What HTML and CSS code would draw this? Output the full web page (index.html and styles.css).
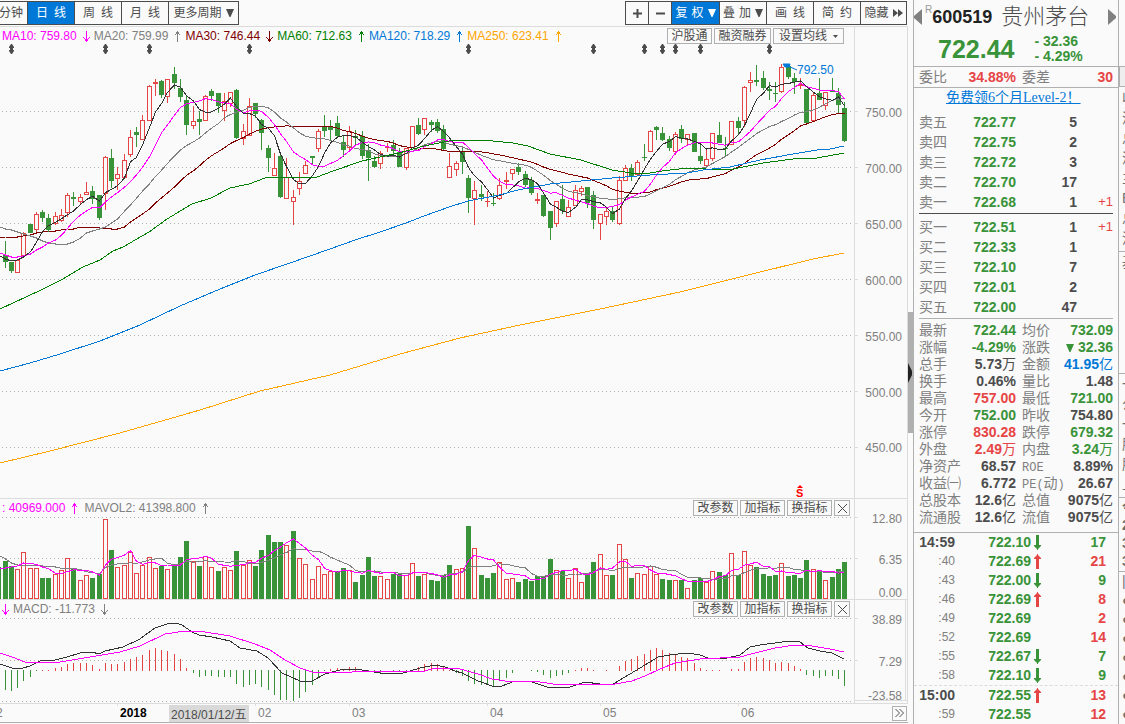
FILE: index.html
```html
<!DOCTYPE html>
<html lang="zh-CN">
<head>
<meta charset="utf-8">
<title>贵州茅台 600519</title>
<link rel="stylesheet" href="styles.css">
</head>
<body>
<svg class="defs" aria-hidden="true">
  <symbol id="up" viewBox="0 0 7 11"><path d="M3.5 11V1M.5 4.5L3.5 1L6.5 4.5" fill="none" stroke="currentColor"/></symbol>
  <symbol id="down" viewBox="0 0 7 11"><path d="M3.5 0V10M.5 6.5L3.5 10L6.5 6.5" fill="none" stroke="currentColor"/></symbol>
  <symbol id="fatup" viewBox="0 0 7 15"><path d="M2 15V5H0V4L3 1V0H4V1L7 4V5H5V15Z" fill="currentColor"/></symbol>
  <symbol id="fatdown" viewBox="0 0 7 15"><path d="M2 0V10H0V11L3 14V15H4V14L7 11V10H5V0Z" fill="currentColor"/></symbol>
  <symbol id="caret" viewBox="0 0 8 8"><path d="M0 0H8L4.5 8H3.5Z" fill="currentColor"/></symbol>
</svg>
<div class="app">
  <main class="main">
    <nav class="toolbar">
      <div class="group">
        <button class="tb tb-cut">分钟</button>
        <button class="tb on"><span>日</span><span>线</span></button>
        <button class="tb"><span>周</span><span>线</span></button>
        <button class="tb"><span>月</span><span>线</span></button>
        <button class="tb tb-more">更多周期<svg class="caret"><use href="#caret"/></svg></button>
      </div>
      <div class="group group-right">
        <button class="tb tb-sm" aria-label="放大"><svg width="9" height="9"><path d="M0 4.5H9M4.5 0V9" stroke="currentColor" stroke-width="2"/></svg></button>
        <button class="tb tb-sm" aria-label="缩小"><svg width="9" height="9"><path d="M0 4.5H9" stroke="currentColor" stroke-width="2"/></svg></button>
        <button class="tb tb-drop on"><span>复</span><span>权</span><svg class="caret"><use href="#caret"/></svg></button>
        <button class="tb tb-drop"><span>叠</span><span>加</span><svg class="caret"><use href="#caret"/></svg></button>
        <button class="tb"><span>画</span><span>线</span></button>
        <button class="tb"><span>简</span><span>约</span></button>
        <button class="tb tb-hide">隐藏<svg width="10" height="8"><path d="M0 0L5 4L0 8ZM5 0L10 4L5 8Z" fill="currentColor"/></svg></button>
      </div>
    </nav>

    <section class="pane">
      <div class="plot">
        <svg id="price" height="471" viewBox="0 27 854 471" preserveAspectRatio="xMinYMin slice"></svg>
        <div class="over">
          <span class="ind magenta">MA10: 759.80<svg class="arr"><use href="#down"/></svg></span>
          <span class="ind gray">MA20: 759.99<svg class="arr"><use href="#up"/></svg></span>
          <span class="ind maroon">MA30: 746.44<svg class="arr"><use href="#down"/></svg></span>
          <span class="ind green60">MA60: 712.63<svg class="arr"><use href="#up"/></svg></span>
          <span class="ind blue">MA120: 718.29<svg class="arr"><use href="#up"/></svg></span>
          <span class="ind orange">MA250: 623.41<svg class="arr"><use href="#up"/></svg></span>
          <span class="tags tags-top">
            <button class="tag">沪股通</button>
            <button class="tag tag-four">融资融券</button>
            <button class="tag tag-wide">设置均线<svg width="5" height="3"><path d="M0 0H5L2.5 3Z" fill="currentColor"/></svg></button>
          </span>
        </div>
      </div>
      <svg class="axis" height="471" viewBox="855 27 52 471">
        <path class="tick" d="M855 111.5h3M855 167.5h3M855 223.5h3M855 279.5h3M855 335.5h3M855 391.5h3M855 447.5h3"/>
        <text x="902" y="117">750.00</text><text x="902" y="173">700.00</text><text x="902" y="229">650.00</text>
        <text x="902" y="285">600.00</text><text x="902" y="341">550.00</text><text x="902" y="397">500.00</text><text x="902" y="452">450.00</text>
      </svg>
    </section>

    <section class="pane">
      <div class="plot">
        <svg id="volume" height="100" viewBox="0 499 854 100" preserveAspectRatio="xMinYMin slice"></svg>
        <div class="over over-volume">
          <span class="ind magenta">: 40969.000<svg class="arr"><use href="#up"/></svg></span>
          <span class="ind gray">MAVOL2: 41398.800<svg class="arr"><use href="#up"/></svg></span>
          <span class="tags">
            <button class="tag">改参数</button><button class="tag">加指标</button><button class="tag">换指标</button>
            <button class="tag tag-x" aria-label="关闭"><svg width="9" height="9"><path d="M0 0L9 9M9 0L0 9" stroke="currentColor"/></svg></button>
          </span>
        </div>
      </div>
      <svg class="axis" height="100" viewBox="855 499 52 100">
        <path class="tick" d="M855 517.5h3M855 558.5h3"/>
        <text x="902" y="523">12.80</text><text x="902" y="564">6.35</text><text x="902" y="597">0.00</text>
      </svg>
    </section>

    <section class="pane">
      <div class="plot">
        <svg id="macd" height="103" viewBox="0 600 854 103" preserveAspectRatio="xMinYMin slice"></svg>
        <div class="over">
          <span class="ind magenta"><svg class="arr"><use href="#down"/></svg></span>
          <span class="ind gray">MACD: -11.773<svg class="arr"><use href="#down"/></svg></span>
          <span class="tags">
            <button class="tag">改参数</button><button class="tag">加指标</button><button class="tag">换指标</button>
            <button class="tag tag-x" aria-label="关闭"><svg width="9" height="9"><path d="M0 0L9 9M9 0L0 9" stroke="currentColor"/></svg></button>
          </span>
        </div>
      </div>
      <svg class="axis" height="103" viewBox="855 600 52 103">
        <path class="tick" d="M855 618.5h3M855 660.5h3M855 700.5H907M905.5 600V701"/>
        <text x="902" y="624">38.89</text><text x="902" y="666">7.29</text><text x="902" y="700">-23.58</text>
      </svg>
    </section>

    <div class="time">
      <svg class="dates" height="18" viewBox="0 704 854 18" preserveAspectRatio="xMinYMin meet">
        <path class="tick" d="M117.5 704v2M255.5 704v2M349.5 704v2M487.5 704v2M600.5 704v2M738.5 704v2"/>
        <text x="-4" y="717">2</text>
        <text class="year" x="120" y="717">2018</text>
        <rect x="169" y="705" width="80" height="17"/>
        <text class="hot" x="171" y="719">2018/01/12/五</text>
        <text x="258" y="717">02</text><text x="352" y="717">03</text><text x="490" y="717">04</text><text x="603" y="717">05</text><text x="741" y="717">06</text>
      </svg>
      <button class="next" aria-label="后移"><svg width="9" height="8"><path d="M.5 0L4.500 4L.5 8M4.500 0L8.500 4L4.500 8" fill="none" stroke="currentColor"/></svg></button>
    </div>
  </main>

  <div class="gutter"><div class="thumb"><svg width="4" height="20"><path d="M0 0L4 8V12L0 20Z"/></svg></div></div>

  <aside class="side">
    <header class="head">
      <div class="name">
        <button class="nav" aria-label="上一只"><svg width="8" height="16"><path d="M8 0V16L0 9V7Z"/></svg></button>
        <sup>R</sup><b>600519</b><h1>贵州茅台</h1>
        <button class="nav" aria-label="下一只"><svg width="8" height="16"><path d="M0 0V16L8 9V7Z"/></svg></button>
      </div>
      <div class="last g">
        <strong>722.44</strong>
        <div class="chg"><span>- 32.36</span><span>- 4.29%</span></div>
      </div>
    </header>
    <table class="stats ratio"><tr><th>委比</th><td class="r">34.88%</td><th>委差</th><td class="r">30</td></tr></table>
    <a class="promo" href="#">免费领6个月Level-2！</a>
    <table class="book">
      <tr><th>卖五</th><td class="g">722.77</td><td>5</td><td></td></tr>
      <tr><th>卖四</th><td class="g">722.75</td><td>2</td><td></td></tr>
      <tr><th>卖三</th><td class="g">722.72</td><td>3</td><td></td></tr>
      <tr><th>卖二</th><td class="g">722.70</td><td>17</td><td></td></tr>
      <tr><th>卖一</th><td class="g">722.68</td><td>1</td><td class="diff">+1</td></tr>
    </table>
    <table class="book bids">
      <tr><th>买一</th><td class="g">722.51</td><td>1</td><td class="diff">+1</td></tr>
      <tr><th>买二</th><td class="g">722.33</td><td>1</td><td></td></tr>
      <tr><th>买三</th><td class="g">722.10</td><td>7</td><td></td></tr>
      <tr><th>买四</th><td class="g">722.01</td><td>2</td><td></td></tr>
      <tr><th>买五</th><td class="g">722.00</td><td>47</td><td></td></tr>
    </table>
    <table class="stats">
      <tr><th>最新</th><td class="g">722.44</td><th>均价</th><td class="g">732.09</td></tr>
      <tr><th>涨幅</th><td class="g">-4.29%</td><th>涨跌</th><td class="g"><svg class="caret"><use href="#caret"/></svg> 32.36</td></tr>
      <tr><th>总手</th><td>5.73<i>万</i></td><th>金额</th><td class="b">41.95<i>亿</i></td></tr>
      <tr><th>换手</th><td>0.46%</td><th>量比</th><td>1.48</td></tr>
      <tr><th>最高</th><td class="r">757.00</td><th>最低</th><td class="g">721.00</td></tr>
      <tr><th>今开</th><td class="g">752.00</td><th>昨收</th><td>754.80</td></tr>
      <tr><th>涨停</th><td class="r">830.28</td><th>跌停</th><td class="g">679.32</td></tr>
      <tr><th>外盘</th><td class="r">2.49<i>万</i></td><th>内盘</th><td class="g">3.24<i>万</i></td></tr>
      <tr><th>净资产</th><td>68.57</td><th><small>ROE</small></th><td>8.89%</td></tr>
      <tr><th>收益㈠</th><td>6.772</td><th><small>PE(</small>动<small>)</small></th><td>26.67</td></tr>
      <tr><th>总股本</th><td>12.6<i>亿</i></td><th>总值</th><td>9075<i>亿</i></td></tr>
      <tr><th>流通股</th><td>12.6<i>亿</i></td><th>流值</th><td>9075<i>亿</i></td></tr>
    </table>
    <table class="ticks">
      <tr><th class="full">14:59</th><td class="g">722.10</td><td class="g"><svg><use href="#fatdown"/></svg></td><td class="g">17</td></tr>
      <tr><th>:40</th><td class="g">722.69</td><td class="r"><svg><use href="#fatup"/></svg></td><td class="r">21</td></tr>
      <tr><th>:43</th><td class="g">722.00</td><td class="g"><svg><use href="#fatdown"/></svg></td><td class="g">9</td></tr>
      <tr><th>:46</th><td class="g">722.69</td><td class="r"><svg><use href="#fatup"/></svg></td><td class="r">8</td></tr>
      <tr><th>:49</th><td class="g">722.69</td><td></td><td class="r">2</td></tr>
      <tr><th>:52</th><td class="g">722.69</td><td></td><td class="r">14</td></tr>
      <tr><th>:55</th><td class="g">722.67</td><td class="g"><svg><use href="#fatdown"/></svg></td><td class="g">7</td></tr>
      <tr><th>:58</th><td class="g">722.10</td><td class="g"><svg><use href="#fatdown"/></svg></td><td class="g">9</td></tr>
    </table>
    <table class="ticks ticks-next">
      <tr><th class="full">15:00</th><td class="g">722.55</td><td class="r"><svg><use href="#fatup"/></svg></td><td class="r">13</td></tr>
      <tr><th>:59</th><td class="g">722.55</td><td></td><td class="r">12</td></tr>
    </table>
  </aside>

  <div class="strip">
    <div class="strip-tab"></div>
    <ul class="s1"><li>收</li><li>深</li><li>总</li><li>深</li><li>主</li><li>E</li><li>总</li><li>流</li><li>基</li></ul>
    <ul class="s2"><li>一</li><li>公</li><li>一</li><li>股</li><li>股</li><li>上</li></ul>
    <ul class="s3"><li>今</li><li>2</li><li>3</li><li>3</li></ul>
    <ul class="s4"><li>|</li><li>●</li><li>●</li><li>●</li><li>●</li><li>●</li><li>●</li><li>●</li></ul>
  </div>
</div>
<script src="chart.js"></script>
</body>
</html>
```
FILE: styles.css
```css
* { box-sizing: border-box; }
body {
  margin: 0;
  background: #fafafa;
  color: #4c4c4c;
  font: 12px/16px "Liberation Sans", "Noto Sans CJK SC", sans-serif;
}
button { font: inherit; color: inherit; background: #fafafa; padding: 0; margin: 0; border: 0; }
svg { display: block; }
.defs { position: absolute; width: 0; height: 0; }
.app { display: flex; min-height: 100vh; max-height: 100vh; overflow: hidden; }
.main { flex: 1; min-width: 0; }

.magenta { color: #f0f; }
.gray { color: #808080; }
.maroon { color: #800000; }
.green60 { color: #008000; }
.blue { color: #0078d7; }
.orange { color: #ffa500; }

/* toolbar */
.toolbar { display: flex; padding: 1px 1px 1px 0; border-bottom: 1px solid #dcdcdc; }
.group { display: flex; }
.group-right { margin-left: auto; }
.tb {
  display: flex; align-items: center; justify-content: center; gap: 6px;
  width: 48px; height: 24px; margin-left: -1px;
  border: 1px solid #4c4c4c; white-space: nowrap;
}
.tb.on { background: #0078d7; color: #fff; }
.tb-cut { width: 29px; justify-content: flex-end; padding-right: 4px; }
.tb-more { width: 71px; gap: 4px; }
.tb-sm { width: 24px; }
.tb-drop { gap: 4px; width: 48px; }
.tb-drop.on { width: 49px; }
.tb-hide { width: 47px; gap: 4px; }
.caret { width: 8px; height: 8px; }

/* chart panes */
.pane { display: grid; grid-template-columns: 1fr 53px; border-bottom: 1px solid #dcdcdc; border-right: 1px solid #dcdcdc; }
.plot { position: relative; min-width: 0; overflow: hidden; }
.plot > svg { width: 100%; }
.axis { width: 53px; border-left: 1px solid #dcdcdc; }
.axis text { font-size: 12px; fill: #808080; text-anchor: end; }
.tick { stroke: #dcdcdc; fill: none; shape-rendering: crispEdges; }
.over { position: absolute; inset: 0 0 auto 0; display: flex; align-items: center; gap: 4px; height: 18px; padding-left: 2px; white-space: nowrap; }
.over-volume { gap: 6px; }
.ind { display: flex; align-items: center; gap: 6px; }
.arr { width: 7px; height: 11px; shape-rendering: crispEdges; }
.tags { display: flex; gap: 2px; margin-left: auto; padding-right: 4px; }
.tags-top { padding-right: 10px; }
.tag { display: flex; align-items: center; justify-content: center; width: 45px; height: 16px; border: 1px solid #b0b0b0; line-height: 14px; }
.tag-four { width: 57px; }
.tag-wide { width: 71px; gap: 6px; }
.tag-x { width: 16px; }

.grid { stroke: #b0b0b0; stroke-dasharray: 1 3; shape-rendering: crispEdges; }
.up { fill: #fafafa; stroke: #e64545; }
.upw { fill: #e64545; }
.dn { fill: #399339; }
.line { fill: none; shape-rendering: crispEdges; stroke-width: 1; }
.mark { fill: #4c4c4c; }
.peak { fill: #0078d7; font-size: 12px; }
.event { fill: #f00; font-size: 11px; font-weight: bold; }

.time { display: flex; align-items: center; border-bottom: 1px solid #b0b0b0; padding-right: 1px; }
.dates { flex: 1; min-width: 0; }
.dates text { font-size: 12px; fill: #808080; }
.dates .year { fill: #000; font-weight: bold; }
.dates .hot { fill: #4c4c4c; }
.dates rect { fill: #d9d9d9; }
.next { display: flex; align-items: center; justify-content: center; width: 15px; height: 15px; border: 1px solid #b0b0b0; }

.gutter { width: 5px; padding-top: 312px; }
.thumb { height: 121px; background: #b0b0b0; display: flex; align-items: center; }
.thumb svg { fill: #222; }

/* quote panel */
.side { width: 206px; border: solid #b0b0b0; border-width: 0 1px; overflow: hidden; }
.g { color: #399339; }
.r { color: #e64545; }
.b { color: #0078d7; }
.head { height: 66px; }
.name { display: flex; align-items: center; height: 33px; padding: 0 2px 0 0; }
.name sup { align-self: flex-start; padding: 2px 0 0 3px; color: #999; }
.name b { font-size: 18px; color: #222; }
.name h1 { flex: 1; margin: 0; padding-left: 9px; font-size: 22px; font-weight: 300; line-height: 32px; white-space: nowrap; }
.nav { background: none; }
.nav svg { fill: #808080; }
.last { display: flex; align-items: center; gap: 20px; height: 32px; padding-left: 24px; font-weight: bold; }
.last strong { font-size: 25px; line-height: 32px; }
.chg { display: flex; flex-direction: column; font-size: 14px; line-height: 15px; }

table { border-collapse: separate; border-spacing: 0; table-layout: fixed; width: 194px; margin: 0 5px; font-size: 14px; white-space: nowrap; }
th { padding: 0; font-weight: normal; color: #808080; text-align: left; }
td { padding: 0; font-weight: bold; text-align: right; }
th small { font: 12px "Liberation Mono", monospace; }
td i { font-style: normal; font-weight: normal; }
.stats { border-top: 1px solid #b0b0b0; padding-top: 3px; }
.stats tr { height: 17px; line-height: 17px; }
.stats th:first-child { width: 42px; }
.stats td:nth-child(2) { width: 55px; }
.stats th:nth-child(3) { width: 48px; padding-left: 6px; }
.stats .caret { display: inline-block; width: 8px; height: 8px; }
.ratio { width: 100%; margin: 0; padding: 0; border-bottom: 1px solid #b0b0b0; }
.stats.ratio tr { height: 20px; line-height: 20px; }
.stats.ratio th:first-child { width: 47px; padding-left: 5px; }
.ratio td:last-child { padding-right: 5px; }
.promo { display: block; padding-left: 32px; font: 14px/20px "Liberation Serif", "Noto Sans CJK SC", serif; color: #0078d7; white-space: nowrap; }
.book { margin-top: 4px; }
.book tr { height: 20px; line-height: 20px; }
.book th { width: 42px; }
.book td:nth-child(2) { width: 55px; }
.book td:nth-child(3) { width: 61px; }
.book .diff { color: #e64545; font-size: 13px; font-weight: normal; }
.bids { margin-top: 1px; border-top: 1px solid #4c4c4c; padding: 3px 0 1px; }
.ticks { width: 100%; margin: 6px 0 0; border-top: 1px solid #b0b0b0; }
.ticks tr { height: 19px; line-height: 19px; }
.ticks th { width: 41px; font-size: 12px; text-align: right; }
.ticks .full { font-size: 14px; font-weight: bold; color: #4c4c4c; }
.ticks td:nth-child(2) { width: 76px; }
.ticks td:nth-child(3) { width: 14px; }
.ticks td:nth-child(4) { padding-right: 12px; }
.ticks svg { width: 7px; height: 15px; margin-left: 3px; }
.ticks-next { margin-top: 0; border-top: 1px dashed #dcdcdc; }

/* neighbouring panel, cut off by the window edge */
.strip { width: 6px; overflow: hidden; color: #707070; font-size: 14px; }
.strip-tab { height: 21px; margin-top: 66px; border: 1px solid #b0b0b0; border-right: 0; background: #eee; }
.strip ul { list-style: none; margin: 0; padding: 0 0 0 3px; line-height: 20px; }
.strip .s1 { margin-top: 1px; height: 285px; }
.s1 li:last-child { border-top: 1px solid #b0b0b0; margin: 3px 0 0 -3px; padding-left: 3px; }
.strip .s2, .strip .s3, .strip .s4 { border-top: 1px solid #b0b0b0; }
.strip .s2 { height: 124px; }
.strip .s3 { line-height: 18px; height: 74px; font-weight: bold; }
.strip .s4 { line-height: 19px; }
```
FILE: chart.js
```js
// Candles: direction, body top, body bottom, wick top, wick bottom
const candles = `g255 262 241 268;g262 271 262 273;r260 273 260 273;r233 256 232 256;g224 233 224 233;r214 230 212 233;g212 218 210 222;g218 230 214 232;r216 224 212 225;r215 221 209 222;
r195 213 193 217;g197 199 192 206;r197 202 194 204;r192 195 182 195;g191 199 186 204;g195 218 195 220;r157 194 156 210;g158 181 149 188;r174 179 167 190;r160 178 154 178;
r137 155 130 157;g132 135 127 147;r120 140 115 140;r86 121 85 121;r82 84 79 96;g81 95 80 98;r79 97 79 103;g74 83 67 89;g88 97 79 102;g100 125 95 135;
r121 126 106 129;g119 122 111 135;r96 121 95 121;g91 96 89 101;g93 106 93 113;r101 111 93 121;r92 104 92 107;g90 138 89 139;r131 139 124 145;r106 136 98 136;
g103 114 103 118;g120 133 119 150;g148 158 145 172;r168 176 153 176;g156 197 153 198;r177 199 158 199;r197 202 190 225;r181 189 172 195;r165 174 161 174;g156 158 156 165;
r131 149 129 152;g126 131 115 137;g126 130 120 141;g123 136 116 137;g142 150 136 157;r131 148 126 152;g136 138 130 145;g136 156 131 159;g150 158 144 181;g161 167 156 168;
r153 164 151 169;r147 148 143 152;g145 151 140 154;g152 167 148 167;r148 168 148 170;r126 148 126 148;g125 134 118 135;r118 130 118 135;g122 125 120 132;g122 131 119 133;
g129 149 125 151;r166 178 153 178;r163 170 161 176;g152 162 147 174;g178 198 175 213;r190 199 181 225;g194 197 185 201;r201 202 191 207;g203 204 193 206;r185 199 178 200;
r180 182 172 189;r169 174 169 180;g167 172 163 175;g174 185 171 187;g180 193 177 195;r199 201 193 204;g195 216 195 217;g211 228 211 240;r201 224 201 227;g199 211 185 214;
r207 217 200 217;r190 206 185 206;r188 192 186 196;g187 203 187 208;g195 220 191 229;r214 224 214 240;r211 217 208 225;g211 220 206 222;r180 224 176 225;r168 181 165 181;
g168 176 164 181;r162 175 160 175;g157 158 144 161;r131 152 130 152;g127 130 126 140;g133 140 127 141;g139 148 136 151;r134 152 132 155;g129 139 125 143;r134 140 134 145;
g133 152 133 152;g156 161 145 164;r159 166 149 166;r133 159 133 161;g135 143 122 143;g148 149 137 156;r121 145 121 145;g121 128 117 135;r87 121 86 127;r80 83 72 92;
g80 82 65 86;g78 88 71 90;g89 91 82 100;g93 94 82 102;r67 92 64 93;g66 77 65 79;g78 82 73 94;r84 86 78 89;g89 123 89 125;r95 121 93 121;
g93 100 78 100;r92 106 92 110;g91 92 78 92;g93 105 88 113;g108 141 102 142`.replace(/\n/g, '').split(';')
  .map(s => ({ up: s[0] === 'r', v: s.slice(1).split(' ').map(Number) }));

// Bar heights; negative marks a falling day
const volumes = [-38,-33,30,47,31,31,-21,-21,25,29,41,-30,19,24,-21,-25,80,-49,32,34,47,26,34,42,31,-33,30,-34,-42,-58,38,-33,43,32,-28,32,29,-48,34,39,-33,-49,-64,-57,-57,54,-68,41,35,20,33,25,28,-28,-31,29,-17,-24,-42,-23,23,20,-25,-25,24,36,-23,25,-19,-18,-24,-34,30,31,-73,51,-24,-21,-26,37,20,21,-17,-20,-18,-23,-23,-40,29,-28,21,31,17,-25,-37,45,24,-24,55,40,-21,26,25,33,25,-20,-19,19,-19,11,-19,-21,17,28,-27,-24,46,-24,48,34,-32,-25,-23,-24,36,-23,-24,-21,-39,30,-28,19,-22,-30,-37];

const macd = [-20,-21,-18,-11,-7,-1,1,1,3,4,7,8,8,8,6,2,8,7,7,9,12,14,16,21,23,21,20,17,12,3,-3,-7,-6,-6,-7,-7,-7,-14,-17,-15,-14,-17,-20,-25,-30,-30,-31,-28,-22,-15,-7,-1,2,3,2,4,4,1,-1,-3,-3,0,-1,-1,-2,1,4,7,8,7,4,1,-3,-6,-11,-14,-15,-15,-16,-11,-8,-3,0,0,-1,-2,-5,-8,-6,-5,-3,1,3,3,1,0,1,0,5,10,12,15,17,21,23,21,18,17,14,13,8,3,1,1,1,0,2,2,9,13,14,13,11,8,9,8,5,2,-5,-6,-8,-6,-6,-9,-16];

const x = i => Math.floor(5.05 + 6.265 * i);
const rect = (cls, l, t, w, h) => `<rect class="${cls}" x="${l}" y="${t}" width="${w}" height="${h}"/>`;
const grid = y => `<path class="grid" d="M2 ${y}.5H851"/>`;
const line = (pts, color) => `<polyline class="line" stroke="${color}" points="${pts}"/>`;

// Moving average; "lead" holds the values before the window is full, from x = 0 on
function average(values, n, lead) {
  const pts = lead.map((y, i) => [i ? x(i - 1) + .5 : 0, y]);
  for (let i = n - 1; i < values.length; i++) {
    const sum = values.slice(i - n + 1, i + 1).reduce((a, b) => a + b, 0);
    pts.push([x(i) + .5, (sum / n).toFixed(1)]);
  }
  return pts.join(' ');
}

const close = candles.map(c => c.up ? c.v[0] : c.v[1]);
let out = [111, 167, 223, 279, 335, 391, 447].map(grid).join('');
candles.forEach((c, i) => {
  const [t, b, wt, wb] = c.v, cx = x(i);
  const cls = c.up ? 'upw' : 'dn';
  out += rect(cls, cx, wt, 1, wb - wt);
  out += c.up && b - t > 2 ? rect('up', cx - 1.5, t + .5, 4, b - t - 1) : rect(cls, cx - 2, t, 5, b - t);
});
out += line(average(close, 30, [238,237,237,237,236,235,233,232,231,231,230,229,229,227,227,227,228,228,229,229,227,222,218,214,209,203,198,193,187,181]), '#800000');
out += line(average(close, 20, [227,229,230,232,234,236,238,241,243,244,244,244,242,238,233,231,229,227,223,219]), '#808080');
out += line(average(close, 10, [253,255,257,257,256,254,250,247,243,240]), '#ff00ff');
out += line(average(close, 5, [256,259,261,260,257]), '#333');
out += line('0,309 41,290 61,280 83,267 100,260 113,251 123,247 149,232 167,219 192,204 211,198 230,188 249,184 265,178 290,177 300,178 317,177 333,171 362,161 380,157 399,153 424,146 449,141 467,140 483,140 513,143 528,146 550,154 581,160 612,170 631,173 650,173 662,171 687,168 706,169 733,169 763,163 793,159 817,158 844,153', '#008000');
out += line('0,371 30,363 60,354 100,341 140,325 180,306 220,289 255,275 290,263 330,249 355,240 380,232 406,223 424,216 449,207 468,201 499,195 518,190 550,184 581,181 612,178 650,175 687,173 703,170 730,167 760,160 793,154 817,150 830,149 844,146', '#0078d7');
out += line('0,463 50,451 120,433 200,410 260,391 330,375 400,354 460,338 520,325 600,309 680,292 740,277 813,259 844,253', '#ffa500');
for (const m of [11, 105, 149, 249, 468, 593, 644, 662, 675, 700, 769]) {
  out += `<path class="mark" d="M${m} 44h1l2 3v1h-1v2h1v1l-2 3h-1l-2-3v-1h1v-2h-1v-1z"/>`;
}
out += '<path d="M783 64H790L789 67L785 67ZM788 66L797 70" fill="#0078d7" stroke="#0078d7"/><text class="peak" x="797" y="74">792.50</text>';
out += '<path d="M797 488L800 485L803 488Z" fill="#f00"/><text class="event" x="796" y="497">S</text>';
document.getElementById('price').innerHTML = out;

out = grid(517) + grid(558) + rect('dn', 0, 567, 1, 32);
volumes.forEach((v, i) => {
  const h = Math.abs(v), t = 599 - h;
  out += v > 0 ? rect('up', x(i) - 1.5, t + .5, 4, h - 1) : rect('dn', x(i) - 2, t, 5, h);
});
const tops = volumes.map(v => 599 - Math.abs(v));
out += line(average(tops, 10, [556,559,563,565,565,565,565,566,566,567]), '#808080');
out += line(average(tops, 5, [568,568,567,566,563]), '#ff00ff');
document.getElementById('volume').innerHTML = out;

out = grid(618) + grid(660) + grid(701);
macd.forEach((v, i) => {
  if (v) out += rect(v > 0 ? 'upw' : 'dn', x(i), v > 0 ? 671 - v : 670, 1, Math.abs(v));
});
out += line('0,664 12,668 17,669 23,668 30,666 40,661 55,660 67,657 80,653 92,652 99,654 105,651 123,647 140,639 148,633 155,628 167,624 176,623 182,625 192,632 199,635 212,637 230,641 240,648 257,651 268,658 282,673 300,681 312,681 325,674 340,670 354,669 362,670 380,673 400,674 420,668 435,665 445,667 455,671 462,673 478,681 492,686 502,686 515,681 532,682 550,688 570,687 585,682 600,684 613,684 630,674 645,665 658,657 670,655 687,653 700,655 708,658 727,658 740,655 750,647 760,645 775,643 790,641 800,642 808,648 820,651 832,653 844,659', '#333');
out += line('0,653 12,657 25,662 60,662 90,657 120,652 140,646 165,634 185,631 205,632 230,636 255,644 270,650 285,660 300,668 312,672 325,673 380,671 400,672 425,671 435,668 460,669 478,674 492,679 505,681 540,682 560,685 590,684 615,684 632,681 645,676 660,669 675,663 700,659 740,657 755,653 775,648 795,645 812,646 830,649 844,652', '#ff00ff');
document.getElementById('macd').innerHTML = out;
```
